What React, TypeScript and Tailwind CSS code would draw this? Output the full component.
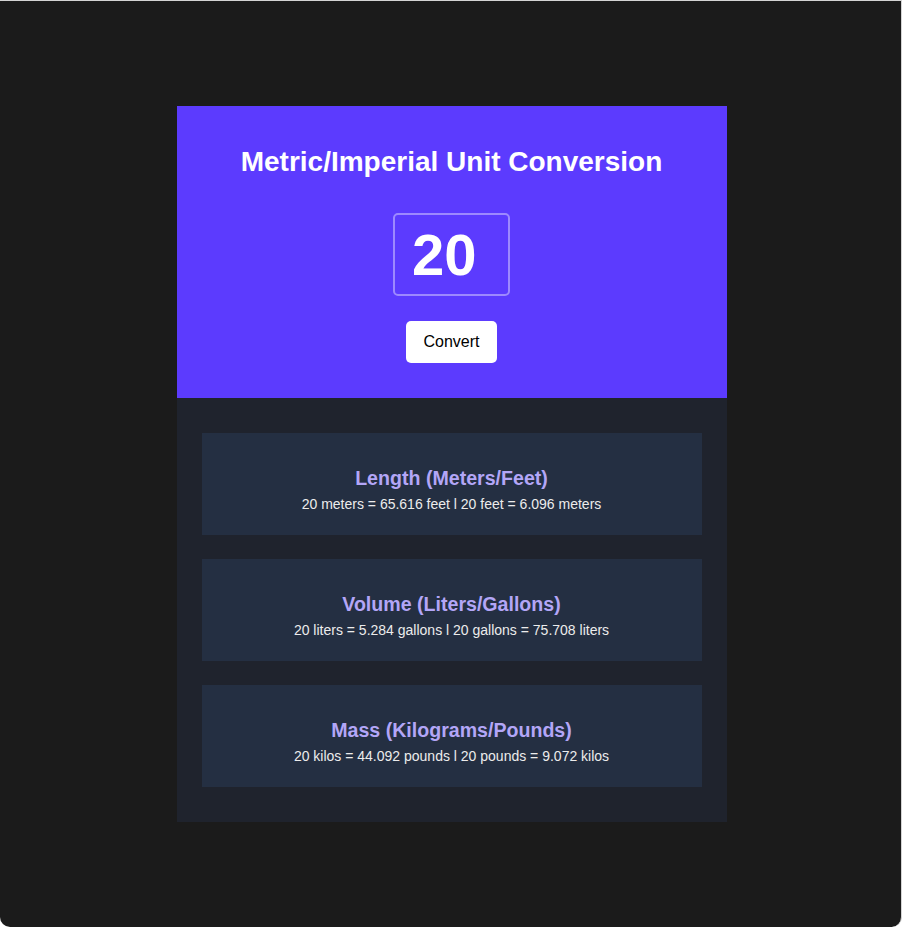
import { useState } from "react";

const font = { fontFamily: '"Liberation Sans", Arial, Helvetica, sans-serif' };

function ResultCard({ title, text }: { title: string; text: string }) {
  return (
    <div className="bg-[#242f42] pt-[34px] pb-[23px] text-center">
      <h2 className="text-[19.6px] leading-[22px] font-bold text-[#b3a6f7]">{title}</h2>
      <p className="mt-[7px] text-[14px] leading-[16px] text-[#ececec]">{text}</p>
    </div>
  );
}

export default function App() {
  const [value, setValue] = useState("20");
  const n = parseFloat(value) || 0;
  const f = (x: number) => x.toFixed(3);

  return (
    <div style={font} className="bg-white">
      <div className="h-[927px] w-full bg-[#1b1b1b] border-t border-r border-[#d4d4d4] rounded-b-[10px] flex items-center justify-center pl-[2px]">
        <div className="w-[550px]">
          {/* 상단 입력 영역 */}
          <div className="bg-[#5c3bfe] pt-[40px] pb-[35px] flex flex-col items-center">
            <h1 className="text-[28px] leading-[32px] font-bold text-white">
              Metric/Imperial Unit Conversion
            </h1>
            <input
              value={value}
              onChange={(e) => setValue(e.target.value)}
              className="mt-[35px] w-[117px] h-[83px] pl-[17px] bg-transparent border-2 border-white/40 rounded-[5px] text-white text-[58px] font-bold outline-none"
            />
            <button className="mt-[25px] w-[91px] h-[42px] bg-white rounded-[5px] text-black text-[16px]">
              Convert
            </button>
          </div>

          {/* 결과 목록 */}
          <div className="bg-[#1f232d] px-[25px] py-[35px] flex flex-col gap-[24px]">
            <ResultCard
              title="Length (Meters/Feet)"
              text={`${value} meters = ${f(n * 3.2808)} feet l ${value} feet = ${f(n * 0.3048)} meters`}
            />
            <ResultCard
              title="Volume (Liters/Gallons)"
              text={`${value} liters = ${f(n * 0.2642)} gallons l ${value} gallons = ${f(n * 3.7854)} liters`}
            />
            <ResultCard
              title="Mass (Kilograms/Pounds)"
              text={`${value} kilos = ${f(n * 2.2046)} pounds l ${value} pounds = ${f(n * 0.4536)} kilos`}
            />
          </div>
        </div>
      </div>
    </div>
  );
}
